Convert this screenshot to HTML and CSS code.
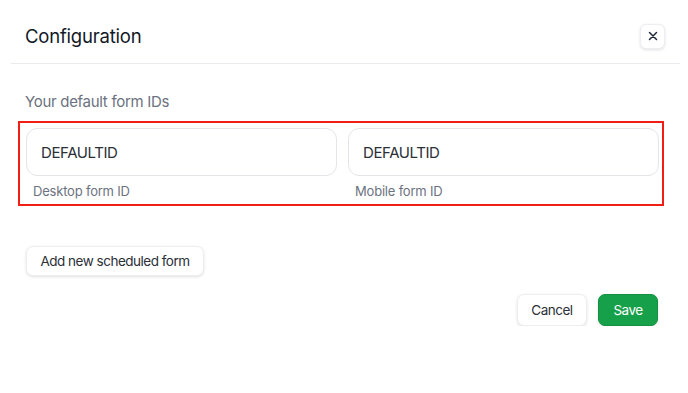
FILE: index.html
```html
<!DOCTYPE html>
<html lang="en">
<head>
<meta charset="utf-8">
<title>Configuration</title>
<link rel="stylesheet" href="styles.css">
</head>
<body>
<div class="dialog">
  <div class="header">
    <h1 class="title">Configuration</h1>
    <button class="close" aria-label="Close">
      <svg width="10" height="10" viewBox="0 0 10 10"><path d="M1.5 1.5 L8.5 8.5 M8.5 1.5 L1.5 8.5" stroke="#1f2937" stroke-width="1.5" stroke-linecap="round"/></svg>
    </button>
  </div>
  <div class="divider"></div>
  <div class="body">
    <p class="section">Your default form IDs</p>
    <div class="highlight">
      <div class="field">
        <div class="input">DEFAULTID</div>
        <div class="label">Desktop form ID</div>
      </div>
      <div class="field">
        <div class="input">DEFAULTID</div>
        <div class="label">Mobile form ID</div>
      </div>
    </div>
    <button class="btn add">Add new scheduled form</button>
    <div class="footer">
      <button class="btn">Cancel</button>
      <button class="btn primary">Save</button>
    </div>
  </div>
</div>
</body>
</html>
```

FILE: styles.css
```css
* { box-sizing: border-box; }
html, body { margin: 0; padding: 0; background: #fff; }
body { font-family: Inter, "Noto Sans", sans-serif; color: #111827; }
.dialog { width: 688px; }
.header {
  display: flex; align-items: center; justify-content: space-between;
  padding: 24px 23px 15px 25px;
  height: 63px;
}
.title { margin: 0; font-size: 18.5px; font-weight: 400; color: #111827; line-height: 24px; letter-spacing: -0.2px; }
.close {
  width: 25px; height: 25px; padding: 0; border: 1px solid #eceef1; border-radius: 6px;
  background: #fff; display: flex; align-items: center; justify-content: center;
  box-shadow: 0 1px 3px rgba(0,0,0,0.12);
}
.divider { height: 1px; background: #e8eaed; margin: 0 8px 0 11px; }
.body { padding: 28px 24px 0 18px; }
.section { margin: 0 0 9px 7px; font-size: 15px; line-height: 20px; color: #6b7280; letter-spacing: -0.3px; }
.highlight {
  border: 2px solid #f01e14;
  width: 646px;
  padding: 5px 4px 5px 6px;
  display: grid; grid-template-columns: 311px 311px; column-gap: 11px;
}
.input {
  height: 48px; border: 1px solid #e3e5e8; border-radius: 11px;
  padding: 0 14px; display: flex; align-items: center;
  font-size: 15px; color: #2b2f36; letter-spacing: -0.4px;
}
.label { margin: 7px 0 0 7px; font-size: 13px; line-height: 16px; color: #6b7280; letter-spacing: -0.2px; }
.btn {
  font-family: Inter, "Noto Sans", sans-serif; font-size: 13.5px; color: #2b2f36;
  background: #fff; border: 1px solid #eceef1; border-radius: 7px;
  box-shadow: 0 1px 3px rgba(0,0,0,0.12);
  height: 32px; padding: 0; cursor: pointer; white-space: nowrap; letter-spacing: -0.5px;
}
.add { display: block; margin: 40px 0 0 8px; width: 178px; height: 30px; }
.footer { display: flex; justify-content: flex-end; gap: 11px; margin-top: 18px; padding-right: 6px; }
.footer .btn { width: 70px; }
.footer .primary { width: 60px; background: #17a04a; border-color: #14903f; color: #fff; }
```
